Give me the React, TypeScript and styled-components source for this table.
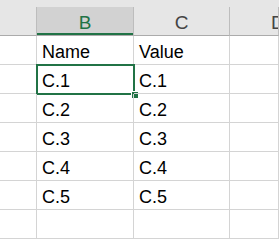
import React from "react";
import styled, { createGlobalStyle } from "styled-components";

const GlobalStyle = createGlobalStyle`
  html, body {
    margin: 0;
    padding: 0;
    background: #ffffff;
  }
  body {
    font-family: "Liberation Sans", Arial, sans-serif;
    overflow: hidden;
  }
`;

const green = "#217346";
const gridLine = "#d4d4d4";

const Sheet = styled.div`
  width: 279px;
  height: 242px;
  overflow: hidden;
  display: flex;
  flex-direction: column;
`;

const TopStrip = styled.div`
  height: 7px;
  background: #e6e6e6;
  flex-shrink: 0;
`;

const Grid = styled.div`
  display: grid;
  grid-template-columns: 37px 97px 96px 1fr;
  grid-template-rows: 29px;
  grid-auto-rows: 29px;
`;

const HeadCell = styled.div<{ $active?: boolean }>`
  background: ${(p) => (p.$active ? "#d2d2d2" : "#e6e6e6")};
  border-right: 1px solid #bdbdbd;
  border-bottom: 1px solid #ababab;
  box-shadow: ${(p) => (p.$active ? `inset 0 -2px 0 ${green}` : "none")};
  color: ${(p) => (p.$active ? green : "#444444")};
  font-size: 19px;
  display: flex;
  align-items: center;
  justify-content: center;
  padding-top: 4px;
  box-sizing: border-box;
  white-space: nowrap;
  overflow: hidden;
`;

// the next column is only partly in view, so its letter sits at the edge
const EdgeHead = styled(HeadCell)`
  justify-content: flex-start;
  padding-left: 41px;
`;

const Cell = styled.div`
  position: relative;
  border-right: 1px solid ${gridLine};
  border-bottom: 1px solid ${gridLine};
  box-sizing: border-box;
  font-size: 18px;
  color: #000000;
  padding: 0 0 1px 5px;
  display: flex;
  align-items: flex-end;
  white-space: nowrap;
`;

const Selection = styled.div`
  position: absolute;
  left: -1px;
  top: -1px;
  right: -2px;
  bottom: -2px;
  border: 2px solid ${green};
  pointer-events: none;
`;

const FillHandle = styled.div`
  position: absolute;
  right: -6px;
  bottom: -6px;
  width: 6px;
  height: 6px;
  background: ${green};
  border: 1px solid #ffffff;
`;

const rows = [
  ["Name", "Value"],
  ["C.1", "C.1"],
  ["C.2", "C.2"],
  ["C.3", "C.3"],
  ["C.4", "C.4"],
  ["C.5", "C.5"],
  ["", ""],
];

export default function App() {
  return (
    <>
      <GlobalStyle />
      <Sheet>
        <TopStrip />
        <Grid>
          <HeadCell />
          <HeadCell $active>B</HeadCell>
          <HeadCell>C</HeadCell>
          <EdgeHead>D</EdgeHead>
          {rows.map((r, i) => (
            <React.Fragment key={i}>
              <Cell />
              <Cell>
                {r[0]}
                {i === 1 && (
                  <Selection>
                    <FillHandle />
                  </Selection>
                )}
              </Cell>
              <Cell>{r[1]}</Cell>
              <Cell />
            </React.Fragment>
          ))}
        </Grid>
      </Sheet>
    </>
  );
}
